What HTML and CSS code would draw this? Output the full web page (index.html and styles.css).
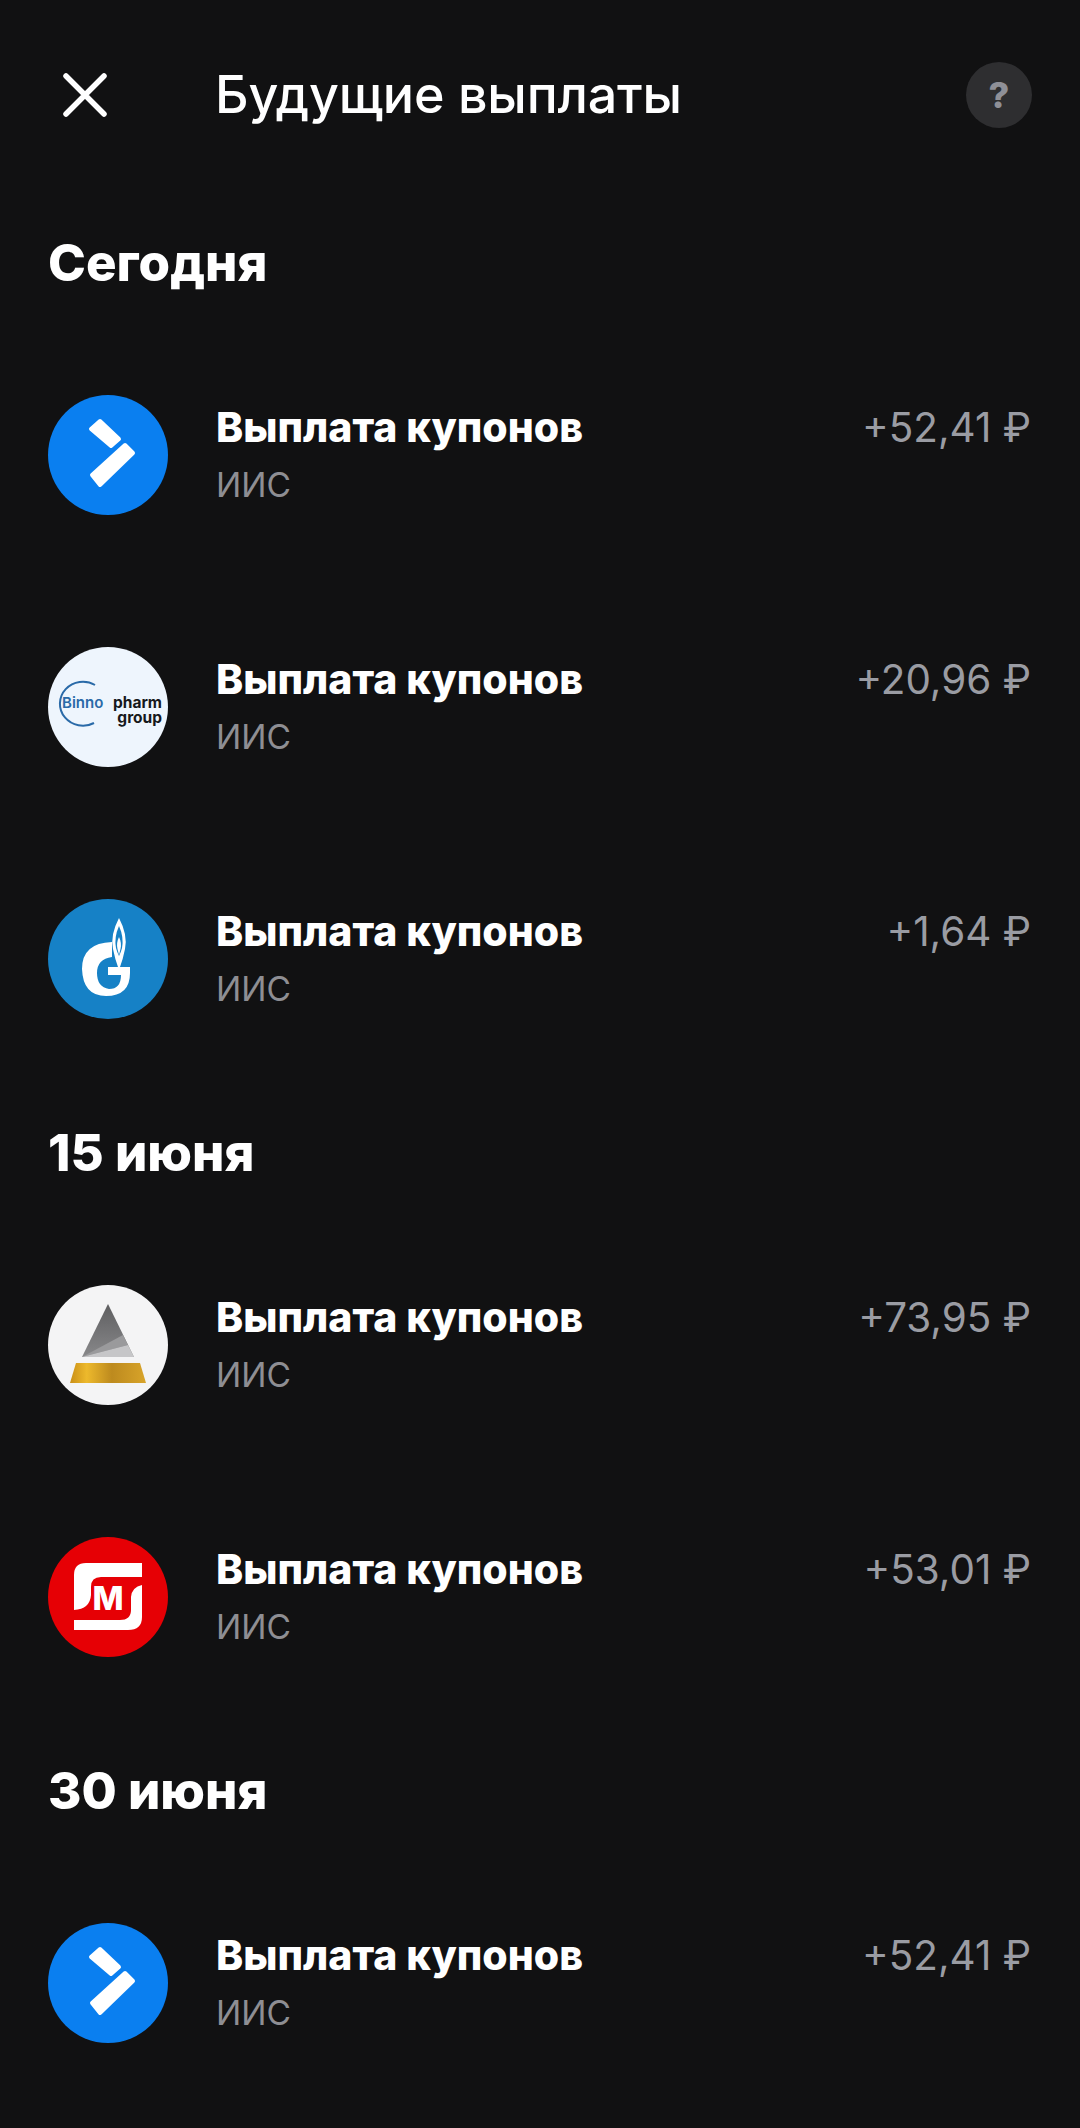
FILE: index.html
```html
<!DOCTYPE html>
<html lang="ru">
<head>
  <meta charset="UTF-8">
  <title>Будущие выплаты</title>
  <link rel="stylesheet" href="styles.css">
</head>
<body>
  <svg class="defs" width="0" height="0">
    <symbol id="logo-arrow" viewBox="0 0 120 120">
      <circle cx="60" cy="60" r="60" fill="#0a7ff0"/>
      <path d="M52 26 L43 34 L63 51 L71 44 Z M85 58 L77 50 L44 80 L52 90 Z" fill="#fff" stroke="#fff" stroke-width="4" stroke-linejoin="round"/>
    </symbol>
  </svg>

  <div class="container">
    <header class="top-bar">
      <svg class="close-icon" viewBox="0 0 44 44" width="44" height="44">
        <path d="M3 3 L41 41 M41 3 L3 41" stroke="#fff" stroke-width="5.5" stroke-linecap="round"/>
      </svg>
      <h1 class="page-title">Будущие выплаты</h1>
      <div class="help-btn">?</div>
    </header>

    <h2 class="day-title">Сегодня</h2>
    <div class="pay-row">
      <svg class="logo" viewBox="0 0 120 120"><use href="#logo-arrow"/></svg>
      <div class="pay-info">
        <div class="pay-name">Выплата купонов</div>
        <div class="pay-account">ИИС</div>
      </div>
      <div class="pay-sum">+52,41 ₽</div>
    </div>
    <div class="pay-row">
      <svg class="logo" viewBox="0 0 120 120">
        <circle cx="60" cy="60" r="60" fill="#eef5fd"/>
        <path d="M47 38 A23 22 0 1 0 46 76" fill="none" stroke="#2a6aa8" stroke-width="2"/>
        <text class="logo-binno"><tspan x="14" y="61">Binno</tspan><tspan class="logo-pharm" x="114" y="61" text-anchor="end">pharm</tspan><tspan class="logo-pharm" x="114" y="76" text-anchor="end">group</tspan></text>
      </svg>
      <div class="pay-info">
        <div class="pay-name">Выплата купонов</div>
        <div class="pay-account">ИИС</div>
      </div>
      <div class="pay-sum">+20,96 ₽</div>
    </div>
    <div class="pay-row">
      <svg class="logo" viewBox="0 0 120 120">
        <circle cx="60" cy="60" r="60" fill="#1681c6"/>
        <path d="M64 43 Q34 44 34 70 Q35 97 58 97 Q82 97 82 74 V68 H60 V76 H73 Q73 90 61 90 Q49 88 49 74 Q49 60 64 58 Z" fill="#fff"/>
        <path d="M71 19 Q80 36 77 50 Q75 60 72 68 H70 Q67 60 65 50 Q62 36 71 19 Z" fill="#fff"/>
        <path d="M71 27 Q76 38 74 49 Q73 53 71 57 Q69 53 68 49 Q66 38 71 27 Z" fill="#1681c6"/>
        <path d="M71 38 Q74 44 72.5 50 L71 56 L69.5 50 Q68 44 71 38 Z" fill="#fff"/>
      </svg>
      <div class="pay-info">
        <div class="pay-name">Выплата купонов</div>
        <div class="pay-account">ИИС</div>
      </div>
      <div class="pay-sum">+1,64 ₽</div>
    </div>

    <h2 class="day-title">15 июня</h2>
    <div class="pay-row">
      <svg class="logo" viewBox="0 0 120 120">
        <defs>
          <linearGradient id="gold" x1="0" y1="0" x2="1" y2="0">
            <stop offset="0" stop-color="#c98f17"/>
            <stop offset="0.22" stop-color="#edb92c"/>
            <stop offset="0.55" stop-color="#bd8a1e"/>
            <stop offset="1" stop-color="#d8a42a"/>
          </linearGradient>
          <linearGradient id="pyramid" x1="0" y1="0" x2="0" y2="1">
            <stop offset="0" stop-color="#5e5e60"/>
            <stop offset="1" stop-color="#88888a"/>
          </linearGradient>
        </defs>
        <circle cx="60" cy="60" r="60" fill="#f4f4f5"/>
        <path d="M60 19 L86 72 H34 Z" fill="url(#pyramid)"/>
        <path d="M34 72 L75 50 L80 60 Z" fill="#9a9a9c"/>
        <path d="M34 72 L80 60 L86 72 Z" fill="#c6c6c8"/>
        <path d="M28 78 H92 L98 98 H22 Z" fill="url(#gold)"/>
      </svg>
      <div class="pay-info">
        <div class="pay-name">Выплата купонов</div>
        <div class="pay-account">ИИС</div>
      </div>
      <div class="pay-sum">+73,95 ₽</div>
    </div>
    <div class="pay-row">
      <svg class="logo" viewBox="0 0 120 120">
        <circle cx="60" cy="60" r="60" fill="#e60005"/>
        <path d="M94 26 H38 Q26 26 26 38 V73 Q42 72 43 58 V50 Q43 40 53 40 H94 Z" fill="#fff"/>
        <path d="M94 48 V80 Q94 93 80 93 H26 V83 H72 Q83 83 83 73 V60 Q84 50 94 48 Z" fill="#fff"/>
        <text class="logo-magnit" x="60" y="73" text-anchor="middle">М</text>
      </svg>
      <div class="pay-info">
        <div class="pay-name">Выплата купонов</div>
        <div class="pay-account">ИИС</div>
      </div>
      <div class="pay-sum">+53,01 ₽</div>
    </div>

    <h2 class="day-title">30 июня</h2>
    <div class="pay-row">
      <svg class="logo" viewBox="0 0 120 120"><use href="#logo-arrow"/></svg>
      <div class="pay-info">
        <div class="pay-name">Выплата купонов</div>
        <div class="pay-account">ИИС</div>
      </div>
      <div class="pay-sum">+52,41 ₽</div>
    </div>
  </div>
</body>
</html>
```
FILE: styles.css
```css
html, body {
  margin: 0;
  padding: 0;
  background: #111112;
}
body {
  color: #fff;
  font-family: "Inter", "Roboto", "Liberation Sans", sans-serif;
}
.defs {
  position: absolute;
}
.container {
  width: 1080px;
  height: 2128px;
  overflow: hidden;
  box-sizing: border-box;
  padding: 0 48px;
}
.top-bar {
  height: 195px;
  box-sizing: border-box;
  padding: 0 0 5px 15px;
  display: flex;
  align-items: center;
}
.close-icon {
  flex: none;
}
.page-title {
  margin: 0 0 0 108px;
  flex: 1;
  font-size: 52px;
  font-weight: 500;
  line-height: 60px;
  letter-spacing: -0.2px;
}
.help-btn {
  width: 66px;
  height: 66px;
  border-radius: 50%;
  background: #2e2e30;
  color: #8f9097;
  font-size: 36px;
  font-weight: 800;
  line-height: 66px;
  text-align: center;
}
.day-title {
  margin: 0;
  height: 134px;
  display: flex;
  align-items: center;
  font-size: 51px;
  font-weight: 800;
}
.pay-row {
  height: 252px;
  display: flex;
  align-items: center;
}
.logo {
  flex: none;
  width: 120px;
  height: 120px;
}
.pay-info {
  flex: 1;
  margin-left: 48px;
}
.pay-name {
  padding-top: 2px;
  font-size: 41px;
  font-weight: 800;
  line-height: 50px;
}
.pay-account {
  margin-top: 8px;
  font-size: 33.5px;
  line-height: 50px;
  color: #8e8e93;
}
.pay-sum {
  align-self: flex-start;
  margin: 74px 1px 0 0;
  font-size: 40.4px;
  line-height: 50px;
  color: #9a9ca3;
}
.logo-binno {
  font: 600 15px "Inter", sans-serif;
  fill: #2a6aa8;
}
.logo-pharm {
  font: 700 15.5px "Inter", sans-serif;
  fill: #16181c;
}
.logo-magnit {
  font: 800 33px "Inter", sans-serif;
  fill: #fff;
}
```
